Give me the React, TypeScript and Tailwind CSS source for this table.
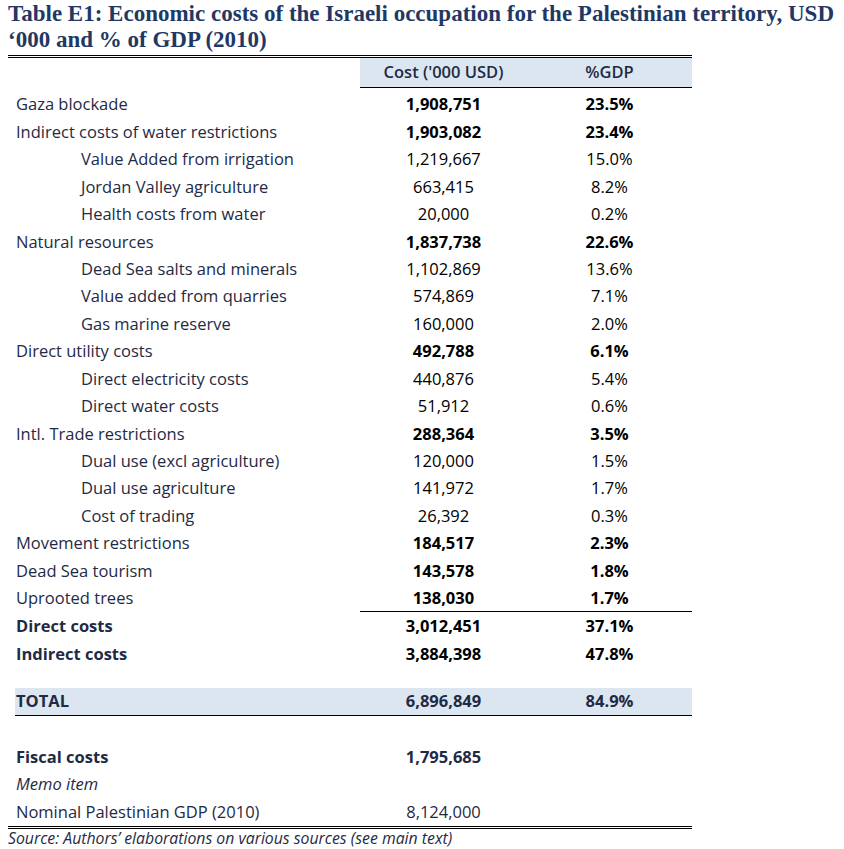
import React from "react";

type Row = { label: string; cost: string; gdp: string; bold?: boolean; indent?: boolean };

const rows: Row[] = [
  { label: "Gaza blockade", cost: "1,908,751", gdp: "23.5%", bold: true },
  { label: "Indirect costs of water restrictions", cost: "1,903,082", gdp: "23.4%", bold: true },
  { label: "Value Added from irrigation", cost: "1,219,667", gdp: "15.0%", indent: true },
  { label: "Jordan Valley agriculture", cost: "663,415", gdp: "8.2%", indent: true },
  { label: "Health costs from water", cost: "20,000", gdp: "0.2%", indent: true },
  { label: "Natural resources", cost: "1,837,738", gdp: "22.6%", bold: true },
  { label: "Dead Sea salts and minerals", cost: "1,102,869", gdp: "13.6%", indent: true },
  { label: "Value added from quarries", cost: "574,869", gdp: "7.1%", indent: true },
  { label: "Gas marine reserve", cost: "160,000", gdp: "2.0%", indent: true },
  { label: "Direct utility costs", cost: "492,788", gdp: "6.1%", bold: true },
  { label: "Direct electricity costs", cost: "440,876", gdp: "5.4%", indent: true },
  { label: "Direct water costs", cost: "51,912", gdp: "0.6%", indent: true },
  { label: "Intl. Trade restrictions", cost: "288,364", gdp: "3.5%", bold: true },
  { label: "Dual use (excl agriculture)", cost: "120,000", gdp: "1.5%", indent: true },
  { label: "Dual use agriculture", cost: "141,972", gdp: "1.7%", indent: true },
  { label: "Cost of trading", cost: "26,392", gdp: "0.3%", indent: true },
  { label: "Movement restrictions", cost: "184,517", gdp: "2.3%", bold: true },
  { label: "Dead Sea tourism", cost: "143,578", gdp: "1.8%", bold: true },
  { label: "Uprooted trees", cost: "138,030", gdp: "1.7%", bold: true },
];

export default function App() {
  return (
    <div className="w-[844px] h-[849px] bg-white overflow-hidden" style={{ fontFamily: "'Open Sans', 'Noto Sans', sans-serif" }}>
      <div
        className="pl-[8px] pt-[1px] text-[23px] leading-[26px] font-bold text-[#1f3864] whitespace-nowrap"
        style={{ fontFamily: "'Liberation Serif', serif" }}
      >
        Table E1: Economic costs of the Israeli occupation for the Palestinian territory, USD
        <br />
        ‘000 and % of GDP (2010)
      </div>
      <div className="ml-[8px] w-[684px] mt-[2px] text-[16.5px]">
        <div className="border-t border-b border-black h-[3px]" />
        <div className="grid grid-cols-[352px_167px_165px] h-[30px] text-[#1f2a44]">
          <div />
          <div className="bg-[#dce6f1] flex items-center justify-center font-semibold border-b border-black">
            Cost ('000 USD)
          </div>
          <div className="bg-[#dce6f1] flex items-center justify-center font-semibold border-b border-black">
            %GDP
          </div>
        </div>
        <div className="h-[3px]" />
        {rows.map((r, i) => {
          const last = i === rows.length - 1;
          return (
            <div key={i} className="grid grid-cols-[352px_167px_165px] h-[27.45px]">
              <div className={`flex items-center text-[#1f2a44] ${r.indent ? "pl-[73px]" : "pl-[8px]"}`}>{r.label}</div>
              <div className={`flex items-center justify-center text-black ${r.bold ? "font-bold" : ""} ${last ? "border-b border-black" : ""}`}>
                {r.cost}
              </div>
              <div className={`flex items-center justify-center text-black ${r.bold ? "font-bold" : ""} ${last ? "border-b border-black" : ""}`}>
                {r.gdp}
              </div>
            </div>
          );
        })}
        {[
          { label: "Direct costs", cost: "3,012,451", gdp: "37.1%" },
          { label: "Indirect costs", cost: "3,884,398", gdp: "47.8%" },
        ].map((r, i) => (
          <div key={i} className="grid grid-cols-[352px_167px_165px] h-[28px] font-bold">
            <div className="flex items-center pl-[8px] text-[#1f2a44]">{r.label}</div>
            <div className="flex items-center justify-center text-black">{r.cost}</div>
            <div className="flex items-center justify-center text-black">{r.gdp}</div>
          </div>
        ))}
        <div className="h-[20px]" />
        <div className="ml-[7px] grid grid-cols-[345px_167px_165px] h-[28px] font-bold bg-[#dce6f1] border-b border-black">
          <div className="flex items-center pl-[1px] text-[#1f2a44]">TOTAL</div>
          <div className="flex items-center justify-center text-[#1f2a44]">6,896,849</div>
          <div className="flex items-center justify-center text-[#1f2a44]">84.9%</div>
        </div>
        <div className="h-[27px]" />
        <div className="grid grid-cols-[352px_167px_165px] h-[27.5px] font-bold">
          <div className="flex items-center pl-[8px] text-[#1f2a44]">Fiscal costs</div>
          <div className="flex items-center justify-center text-[#1f2a44]">1,795,685</div>
          <div />
        </div>
        <div className="grid grid-cols-[352px_167px_165px] h-[27.5px]">
          <div className="flex items-center pl-[8px] italic text-[#1f2a44]">Memo item</div>
          <div />
          <div />
        </div>
        <div className="grid grid-cols-[352px_167px_165px] h-[27.5px]">
          <div className="flex items-center pl-[8px] text-[#1f2a44]">Nominal Palestinian GDP (2010)</div>
          <div className="flex items-center justify-center text-[#1f2a44]">8,124,000</div>
          <div />
        </div>
        <div className="border-t border-b border-black h-[3px]" />
      </div>
      <div className="pl-[8px] text-[15.8px] italic text-[#1f2a44] leading-[18px] whitespace-nowrap">
        Source: Authors’ elaborations on various sources (see main text)
      </div>
    </div>
  );
}
